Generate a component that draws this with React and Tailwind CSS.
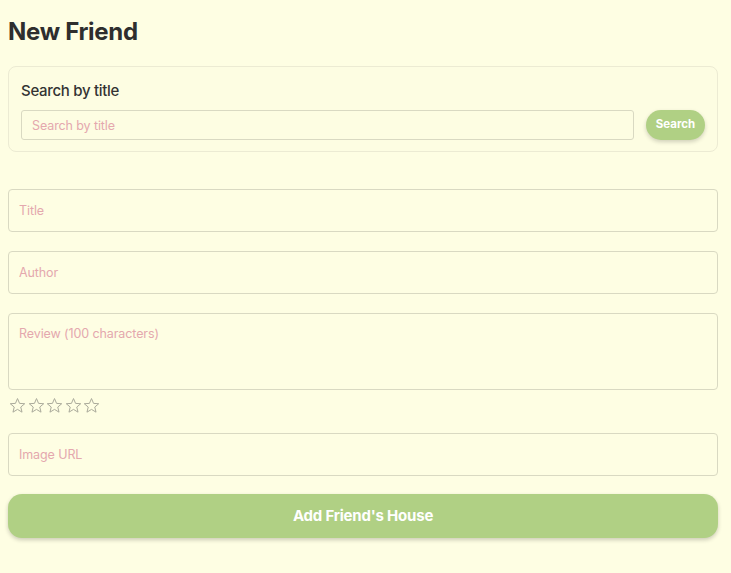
import React from "react";

function StarIcon() {
  return (
    <svg width="17" height="17" viewBox="0 0 24 24" className="shrink-0">
      <polygon
        points="12,2.2 14.9,9 22.2,9.5 16.6,14.2 18.4,21.4 12,17.5 5.6,21.4 7.4,14.2 1.8,9.5 9.1,9"
        fill="none"
        stroke="#a9a99a"
        strokeWidth="1.4"
        strokeLinejoin="round"
      />
    </svg>
  );
}

export default function App() {
  const inputCls =
    "w-full h-[43px] rounded-[4px] border border-[#d9d9c2] bg-transparent px-[10px] text-[12.5px] tracking-[-0.1px] text-[#333] placeholder:text-[#e4a8ae] outline-none";
  return (
    <div
      className="min-h-screen bg-[#fefee3] pl-2 pr-[13px] pt-4 pb-8"
      style={{ fontFamily: "Inter, 'Noto Sans', sans-serif" }}
    >
      <h1 className="text-[24px] leading-8 font-bold tracking-[-0.3px] text-[#2e2e2e]">New Friend</h1>

      <div className="mt-[18px] rounded-[8px] border border-[#ecebd3] bg-[#fdfde2] px-3 pt-3 pb-[11px]">
        <div className="text-[15px] leading-6 font-medium tracking-[-0.3px] text-[#333]">Search by title</div>
        <div className="mt-[7px] flex items-center gap-3">
          <input
            className="flex-1 h-[30px] rounded-[3px] border border-[#d9d9c2] bg-transparent px-[10px] text-[12.5px] tracking-[-0.1px] placeholder:text-[#e4a8ae] outline-none"
            placeholder="Search by title"
          />
          <button className="h-[30px] w-[59px] rounded-full bg-[#b0d084] text-[11.5px] font-bold text-white shadow-[0_2px_4px_rgba(0,0,0,0.18)]">
            Search
          </button>
        </div>
      </div>

      <div className="mt-[37px] flex flex-col">
        <input className={inputCls} placeholder="Title" />
        <input className={inputCls + " mt-[19px]"} placeholder="Author" />
        <textarea
          className="mt-[19px] h-[77px] w-full resize-none rounded-[4px] border border-[#d9d9c2] bg-transparent px-[10px] pt-[11px] text-[12.5px] tracking-[-0.1px] text-[#333] placeholder:text-[#e4a8ae] outline-none"
          placeholder="Review (100 characters)"
        />
        <div className="mt-[7px] flex items-center gap-[1.5px] pl-[1px]">
          <StarIcon />
          <StarIcon />
          <StarIcon />
          <StarIcon />
          <StarIcon />
        </div>
        <input className={inputCls + " mt-[19px]"} placeholder="Image URL" />
        <button className="mt-[18px] h-[44px] w-full rounded-[14px] bg-[#b0d084] text-[15px] font-bold tracking-[-0.2px] text-white shadow-[0_2px_4px_rgba(0,0,0,0.2)]">
          Add Friend's House
        </button>
      </div>
    </div>
  );
}
